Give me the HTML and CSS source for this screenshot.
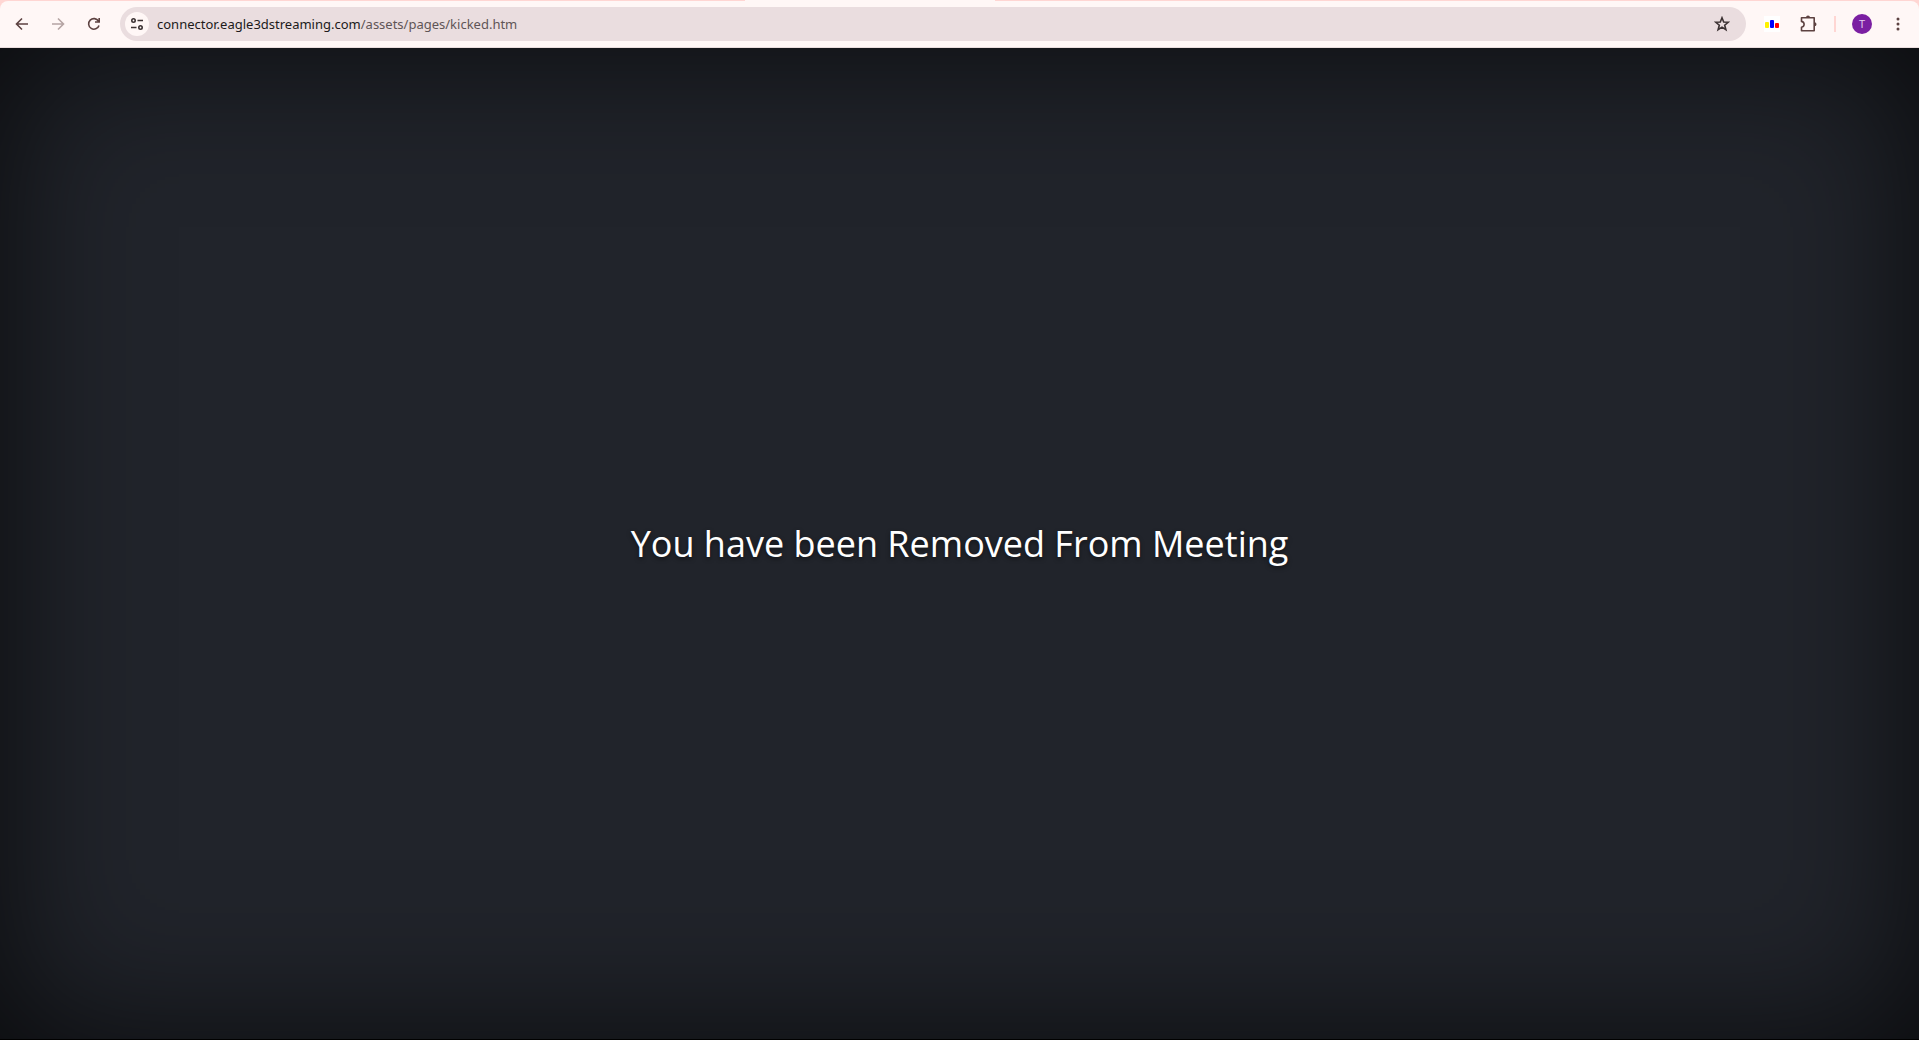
FILE: index.html
```
<!DOCTYPE html>
<html lang="en">
<head>
    <meta charset="UTF-8">
    <title>Removed From Meeting</title>
    <link rel="stylesheet" href="styles.css">
</head>
<body>
    <header class="browser">
        <div class="tabs"><span class="tab"></span></div>
        <div class="toolbar">
            <button class="btn" type="button" aria-label="Back">
                <svg width="14" height="14" viewBox="0 0 14 14"><path d="M13 7H2M7 1.5L1.5 7L7 12.5"/></svg>
            </button>
            <button class="btn" type="button" aria-label="Forward" disabled>
                <svg width="14" height="14" viewBox="0 0 14 14"><path d="M1 7H12M7 1.5L12.5 7L7 12.5"/></svg>
            </button>
            <button class="btn" type="button" aria-label="Reload">
                <svg width="14" height="14" viewBox="0 0 14 14"><path d="M12 8.5A5.3 5.3 0 1 1 11.5 4.2M12.2 1V5H8"/></svg>
            </button>
            <form class="address">
                <button class="site" type="button" aria-label="View site information">
                    <svg width="14" height="14" viewBox="0 0 14 14"><circle cx="3.5" cy="3.5" r="1.7"/><path d="M7.5 3.5H13M1 10.5H6.5"/><circle cx="10.5" cy="10.5" r="1.7"/></svg>
                </button>
                <a class="url" href="#">connector.eagle3dstreaming.com<span>/assets/pages/kicked.htm</span></a>
                <button class="star" type="button" aria-label="Bookmark this tab">
                    <svg width="16" height="16" viewBox="0 0 16 16"><path d="M8 1.8L9.7 6L14.2 6.3L10.7 9.2L11.9 13.7L8 11.2L4.1 13.7L5.3 9.2L1.8 6.3L6.3 6Z"/></svg>
                </button>
            </form>
            <button class="btn" type="button" aria-label="Extension">
                <svg class="bars" width="16" height="16" viewBox="0 0 16 16"><rect width="16" height="16" fill="#fff"/><rect x="1" y="6" width="4" height="6" rx="1" fill="#fff200"/><rect x="6" y="4" width="4" height="8" rx="1" fill="#00f"/><rect x="11" y="7" width="4" height="5" rx="1" fill="#f00"/></svg>
            </button>
            <button class="btn" type="button" aria-label="Extensions">
                <svg width="18" height="18" viewBox="0 0 18 18"><path d="M2.5 2.8H15.2V15.8H2.5V12.3C6 11.5 6 7.2 2.5 6.4Z" stroke-linejoin="round"/><path class="knob" d="M7 2.5A2 2 0 0 1 11 2.5ZM15.5 7.3A2 2 0 0 1 15.5 11.3Z"/></svg>
            </button>
            <span class="divider"></span>
            <button class="btn" type="button" aria-label="Profile"><span class="avatar">T</span></button>
            <button class="btn menu" type="button" aria-label="Menu">
                <svg width="16" height="16" viewBox="0 0 16 16"><circle cx="8" cy="3" r="1.5"/><circle cx="8" cy="8" r="1.5"/><circle cx="8" cy="13" r="1.5"/></svg>
            </button>
        </div>
    </header>
    <main class="page">
        <h1>You have been Removed From Meeting</h1>
    </main>
</body>
</html>
```
FILE: styles.css
```
* {
    box-sizing: border-box;
}

body {
    display: flex;
    flex-direction: column;
    min-height: 100vh;
    margin: 0;
    background: #000;
    font-family: "Open Sans", sans-serif;
}

button {
    padding: 0;
    border: 0;
    background: none;
    font: inherit;
}

svg {
    display: block;
    fill: none;
    stroke: #5d4241;
    stroke-width: 1.6;
}

/* browser bar */
.browser {
    background: #ffd6d3;
}

.tabs {
    display: flex;
    height: 1px;
}

.tab {
    width: 250px;
    margin-left: 745px;
    background: #fff7f6;
}

.toolbar {
    display: flex;
    align-items: center;
    height: 47px;
    padding: 0 3px 0 4px;
    border-bottom: 1px solid #eadddd;
    border-radius: 8px 8px 0 0;
    background: #fff7f6;
}

.btn {
    display: flex;
    align-items: center;
    justify-content: center;
    width: 36px;
    height: 34px;
}

.btn:disabled {
    opacity: .45;
}

.address {
    display: flex;
    flex: 1;
    align-items: center;
    height: 34px;
    margin: 0 8px;
    padding: 0 16px 0 5px;
    border-radius: 17px;
    background: #eadddf;
}

.site {
    display: flex;
    align-items: center;
    justify-content: center;
    width: 24px;
    height: 24px;
    border-radius: 50%;
    background: #fff7f6;
}

.site svg,
.star svg {
    stroke: #3c3233;
}

.url {
    flex: 1;
    margin-left: 8px;
    color: #201a1a;
    font-family: "Noto Sans", sans-serif;
    font-size: 13px;
    line-height: 20px;
    text-decoration: none;
}

.url span {
    color: #5f5556;
}

.bars {
    stroke: none;
}

.knob,
.menu svg {
    fill: #5d4241;
    stroke: none;
}

.divider {
    width: 2px;
    height: 16px;
    margin: 0 8px;
    background: #ffd6d3;
}

.avatar {
    width: 20px;
    height: 20px;
    border-radius: 50%;
    background: #7b1fa2;
    color: #e6d0ee;
    font-size: 11px;
    line-height: 20px;
    text-align: center;
}

/* message */
.page {
    display: flex;
    flex: 1;
    align-items: center;
    justify-content: center;
    margin-bottom: 1px;
    background: #21242b;
    box-shadow: inset 0 0 150px rgba(0, 0, 0, .75);
}

h1 {
    margin: 0;
    color: #fff;
    font-size: 36px;
    font-weight: 400;
    text-shadow: 0 2px 4px rgba(0, 0, 0, .5);
}
```
